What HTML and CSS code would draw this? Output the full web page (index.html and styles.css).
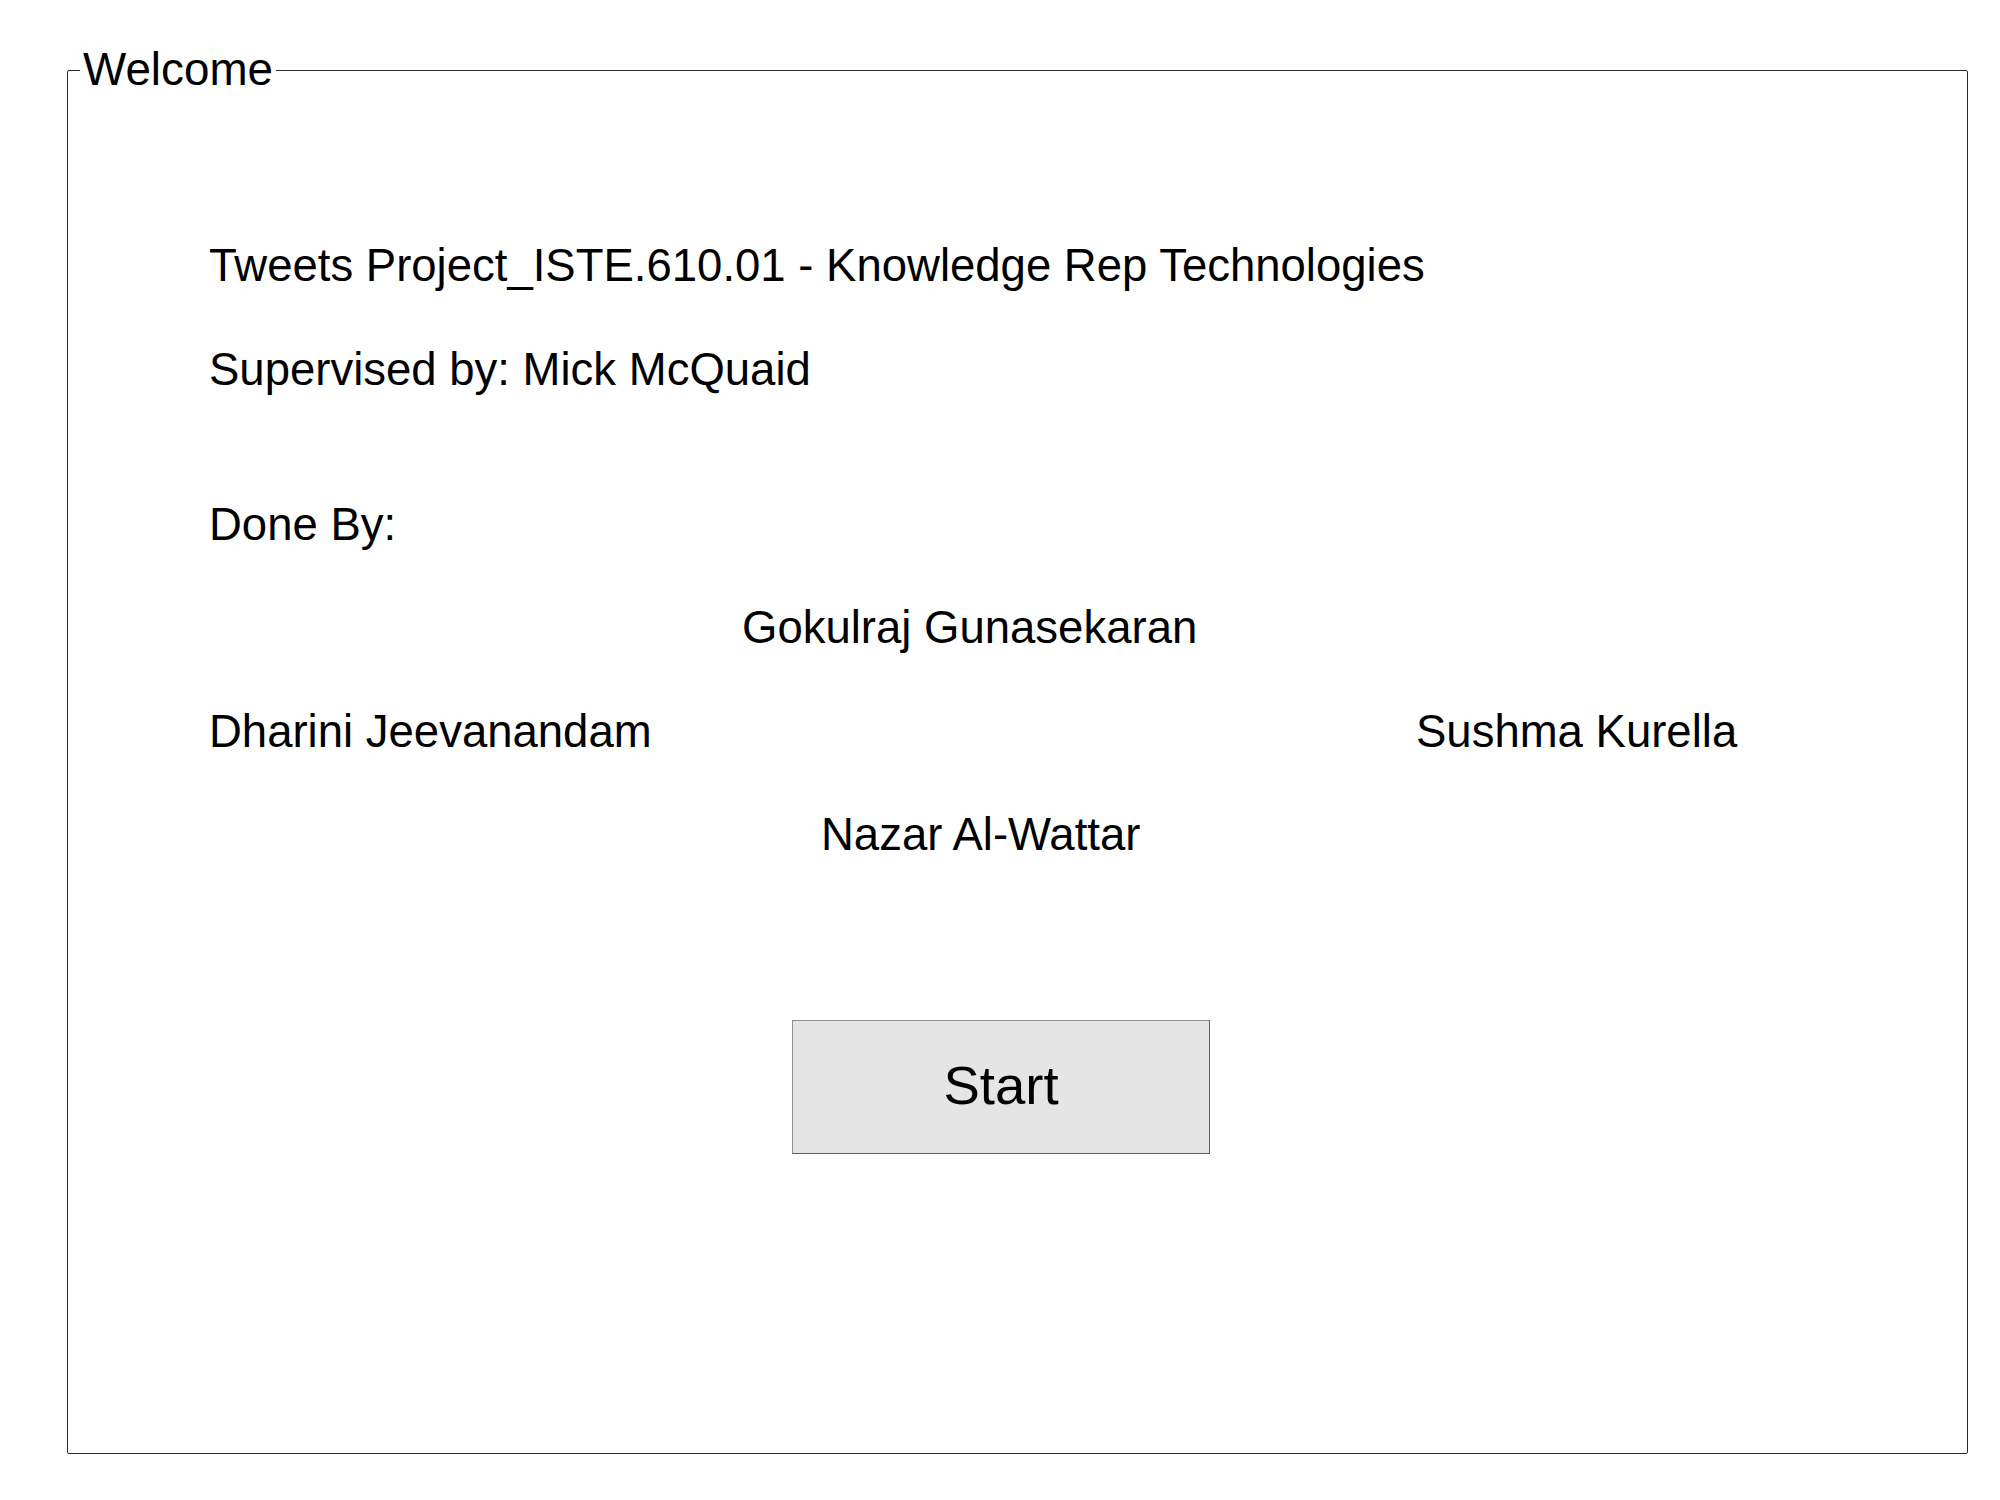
FILE: index.html
```html
<!DOCTYPE html>
<html>
<head>
<meta charset="utf-8">
<title>Welcome</title>
<link rel="stylesheet" href="styles.css">
</head>
<body>
<fieldset class="panel">
  <legend class="panel-title">Welcome</legend>
  <div class="content">
    <div class="row">Tweets Project_ISTE.610.01 - Knowledge Rep Technologies</div>
    <div class="row">Supervised by: Mick McQuaid</div>
    <div class="row row-gap">Done By:</div>
    <div class="row row-gokul">Gokulraj Gunasekaran</div>
    <div class="row row-pair">
      <span>Dharini Jeevanandam</span>
      <span>Sushma Kurella</span>
    </div>
    <div class="row row-nazar">Nazar Al-Wattar</div>
    <div class="actions">
      <button class="start-btn" type="button">Start</button>
    </div>
  </div>
</fieldset>
</body>
</html>
```
FILE: styles.css
```css
html, body {
  margin: 0;
  padding: 0;
  background: #ffffff;
}

body {
  font-family: "Liberation Sans", Arial, sans-serif;
  color: #000000;
}

.panel {
  box-sizing: border-box;
  width: 1901px;
  margin: 45px 0 0 67px;
  padding: 0;
  border: 1px solid #2a2a2a;
  border-radius: 2px;
  min-width: 0;
}

.panel-title {
  margin-left: 12px;
  padding: 0 3px;
  font-size: 45.8px;
  line-height: 50px;
}

.content {
  padding: 119px 0 0 141px;
  height: 1358px;
  box-sizing: border-box;
  font-size: 45.5px;
}

.row {
  line-height: 103.5px;
  height: 103.5px;
  white-space: nowrap;
}

.row-gap {
  margin-top: 51.5px;
}

.row-gokul {
  padding-left: 533px;
}

.row-pair {
  display: grid;
  grid-template-columns: 1207px auto;
}

.row-nazar {
  padding-left: 612px;
}

.actions {
  margin-top: 133px;
  padding-left: 583px;
}

.start-btn {
  box-sizing: border-box;
  width: 418px;
  height: 134px;
  margin: 0;
  padding: 0 0 2px;
  background: #e5e5e5;
  border: 1px solid;
  border-color: #8e8e8e #5c5c5c #5c5c5c #8e8e8e;
  border-radius: 0;
  font-family: "Liberation Sans", Arial, sans-serif;
  font-size: 54.5px;
  color: #000000;
  display: flex;
  align-items: center;
  justify-content: center;
}
```
